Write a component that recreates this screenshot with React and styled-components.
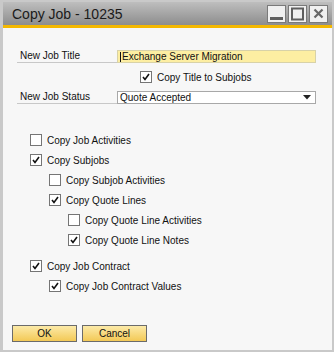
import React from "react";
import styled, { createGlobalStyle } from "styled-components";

const GlobalStyle = createGlobalStyle`
  html, body { margin: 0; padding: 0; background: #ffffff; }
  body { font-family: "Liberation Sans", Arial, sans-serif; }
  * { box-sizing: border-box; }
`;

const Window = styled.div`
  width: 334px;
  height: 352px;
  border: 2px solid #c9c9c9;
  border-left-width: 3px;
  display: flex;
  flex-direction: column;
  background: #f7f7f7;
`;

const TitleBar = styled.div`
  height: 23px;
  display: flex;
  align-items: center;
  justify-content: space-between;
  padding: 0 4px 0 9px;
  background: linear-gradient(#bebebe, #8d8d8d);
`;

const Title = styled.span`
  font-size: 14px;
  color: #1a1a1a;
  line-height: 1;
`;

const WinButtons = styled.div`
  display: flex;
  gap: 2px;
  align-self: flex-start;
  margin-top: 3px;
`;

const WinButton = styled.div`
  width: 19px;
  height: 18px;
  border: 1px solid #7a7a7a;
  background: #f0f0f0;
  display: flex;
  align-items: center;
  justify-content: center;
`;

const Accent = styled.div`
  height: 3px;
  background: #f4b800;
`;

const Content = styled.div`
  flex: 1;
  display: flex;
  flex-direction: column;
  padding: 22px 0 0 9px;
`;

const Fields = styled.div`
  display: flex;
  flex-direction: column;
  padding-left: 5px;
`;

const FieldRow = styled.div`
  display: flex;
  height: 13px;
`;

const FieldLabel = styled.div`
  width: 100px;
  height: 13px;
  border-bottom: 1px solid #c8c8c8;
  padding-left: 3px;
  font-size: 10px;
  line-height: 12px;
  color: #111;
`;

const FieldBox = styled.div`
  width: 199px;
  height: 13px;
  border: 1px solid ${(p) => (p.$highlight ? "#d8d2a8" : "#a8a8a8")};
  background: ${(p) => (p.$highlight ? "#fdeea2" : "#ffffff")};
  display: flex;
  align-items: center;
  padding-left: 2px;
  padding-right: 4px;
  font-size: 10px;
  line-height: 11px;
  color: #111;
`;

const Caret = styled.span`
  width: 1px;
  height: 10px;
  background: #111;
  margin-right: 1px;
`;

const BoxText = styled.span`
  flex: 1;
`;

const SubRow = styled.div`
  display: flex;
  height: 12px;
  margin: 8px 0 8px 123px;
`;

const List = styled.div`
  display: flex;
  flex-direction: column;
  margin-top: 26px;
  padding-left: 18px;
`;

const Item = styled.label`
  display: flex;
  align-items: center;
  gap: 5px;
  height: 20px;
  padding-left: ${(p) => p.$level * 19}px;
  margin-top: ${(p) => (p.$gap ? "6px" : "0")};
  font-size: 10px;
  color: #111;
`;

const InlineItem = styled(Item)`
  height: 12px;
`;

const Box = styled.span`
  width: 12px;
  height: 12px;
  border: 1px solid #757575;
  background: #ffffff;
  display: flex;
  align-items: center;
  justify-content: center;
  flex-shrink: 0;
`;

const Buttons = styled.div`
  display: flex;
  gap: 5px;
  margin-top: auto;
  margin-bottom: 8px;
`;

const Button = styled.div`
  width: 65px;
  height: 17px;
  border: 1px solid #6b6b6b;
  background: linear-gradient(#fceaa8, #f3c956);
  display: flex;
  align-items: center;
  justify-content: center;
  font-size: 10px;
  color: #111;
`;

const Check = () => (
  <svg width="10" height="10" viewBox="0 0 10 10">
    <polyline points="2,5 4,7.5 8,2" fill="none" stroke="#111" strokeWidth="1.6" />
  </svg>
);

const CheckBox = ({ checked }) => <Box>{checked && <Check />}</Box>;

const items = [
  { label: "Copy Job Activities", level: 0, checked: false },
  { label: "Copy Subjobs", level: 0, checked: true },
  { label: "Copy Subjob Activities", level: 1, checked: false },
  { label: "Copy Quote Lines", level: 1, checked: true },
  { label: "Copy Quote Line Activities", level: 2, checked: false },
  { label: "Copy Quote Line Notes", level: 2, checked: true },
  { label: "Copy Job Contract", level: 0, checked: true, gap: true },
  { label: "Copy Job Contract Values", level: 1, checked: true },
];

export default function App() {
  return (
    <>
      <GlobalStyle />
      <Window>
        <TitleBar>
          <Title>Copy Job - 10235</Title>
          <WinButtons>
            <WinButton>
              <svg width="15" height="14" viewBox="0 0 15 14">
                <rect x="1" y="10" width="13" height="3" fill="#5f5f5f" />
              </svg>
            </WinButton>
            <WinButton>
              <svg width="15" height="14" viewBox="0 0 15 14">
                <rect x="2" y="1.5" width="11" height="11" fill="none" stroke="#5f5f5f" strokeWidth="2" />
              </svg>
            </WinButton>
            <WinButton>
              <svg width="15" height="14" viewBox="0 0 15 14">
                <path d="M3.5 2.5 L11.5 10.5 M11.5 2.5 L3.5 10.5" stroke="#666" strokeWidth="2.2" />
              </svg>
            </WinButton>
          </WinButtons>
        </TitleBar>
        <Accent />
        <Content>
          <Fields>
            <FieldRow>
              <FieldLabel>New Job Title</FieldLabel>
              <FieldBox $highlight>
                <Caret />
                <BoxText>Exchange Server Migration</BoxText>
              </FieldBox>
            </FieldRow>
            <SubRow>
              <InlineItem $level={0}>
                <CheckBox checked />
                Copy Title to Subjobs
              </InlineItem>
            </SubRow>
            <FieldRow>
              <FieldLabel>New Job Status</FieldLabel>
              <FieldBox>
                <BoxText>Quote Accepted</BoxText>
                <svg width="8" height="5" viewBox="0 0 8 5">
                  <polygon points="0,0 8,0 4,4.5" fill="#222" />
                </svg>
              </FieldBox>
            </FieldRow>
          </Fields>
          <List>
            {items.map((it) => (
              <Item key={it.label} $level={it.level} $gap={it.gap}>
                <CheckBox checked={it.checked} />
                {it.label}
              </Item>
            ))}
          </List>
          <Buttons>
            <Button>OK</Button>
            <Button>Cancel</Button>
          </Buttons>
        </Content>
      </Window>
    </>
  );
}
